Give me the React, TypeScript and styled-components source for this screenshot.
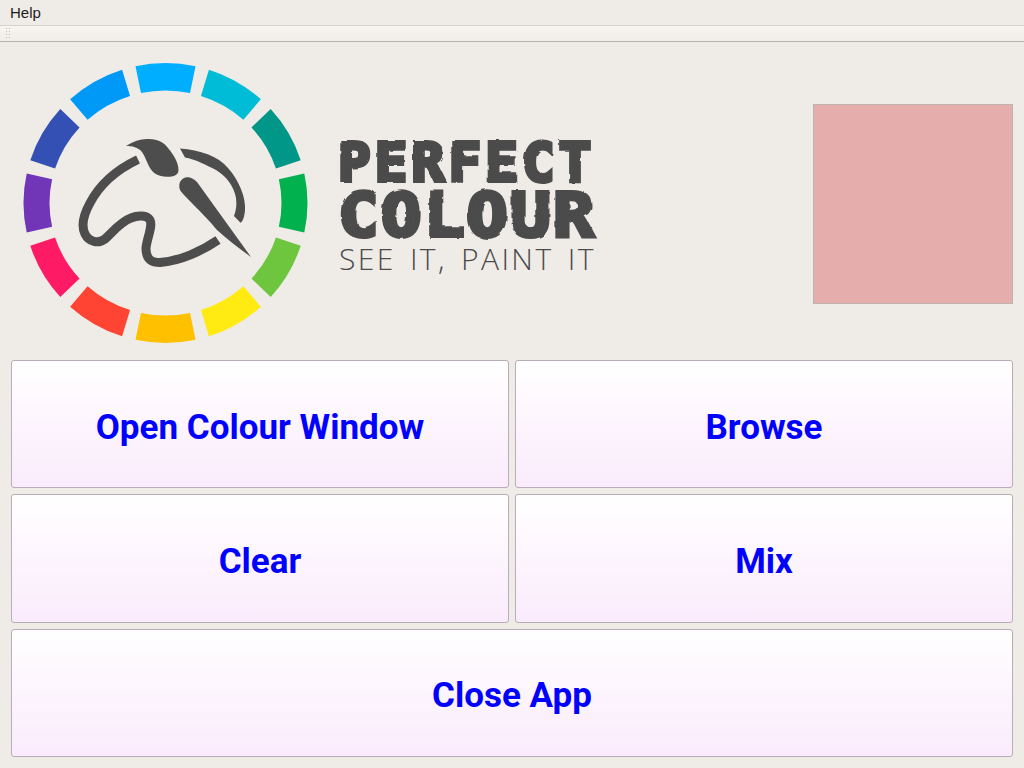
import React from 'react';
import styled, { createGlobalStyle } from 'styled-components';

const GlobalStyle = createGlobalStyle`
  html, body {
    margin: 0;
    padding: 0;
    background-color: #efebe7;
  }
`;

const AppWindow = styled.div`
  display: flex;
  flex-direction: column;
  height: 768px;
  width: 1024px;
  overflow: hidden;
  background-color: #efebe7;
`;

const MenuBar = styled.div`
  display: flex;
  align-items: center;
  height: 25px;
  padding: 0 10px 0;
  border-bottom: 1px solid #d6d2ce;
  box-sizing: content-box;
`;

const MenuItem = styled.span`
  font-family: 'Liberation Sans', Arial, sans-serif;
  font-size: 15px;
  color: #1c1c1c;
`;

const ToolBar = styled.div`
  height: 15px;
  border-bottom: 1px solid #b5b1ad;
  background: linear-gradient(#f7f4f0, #f1eee9);
  display: flex;
  padding-left: 5px;
`;

const Grip = styled.div`
  width: 5px;
  height: 13px;
  margin-top: 1px;
  background-image: radial-gradient(circle, #bdb9b5 0.8px, transparent 1px);
  background-size: 3px 3px;
`;

const Content = styled.main`
  flex: 1;
  display: flex;
  flex-direction: column;
  padding: 6px 11px 11px;
  min-height: 0;
`;

const Header = styled.header`
  display: flex;
  align-items: center;
  height: 312px;
`;

const LogoMark = styled.svg`
  width: 310px;
  height: 306px;
  flex: none;
`;

const Wordmark = styled.div`
  display: flex;
  flex-direction: column;
  margin: 5px 0 0 17px;
  color: #4b4b4b;
  width: 263px;
`;

const BrushLine = styled.div`
  font-family: 'DejaVu Sans Mono', monospace;
  font-weight: 700;
  -webkit-text-stroke: 4px #4b4b4b;
  white-space: nowrap;
  transform-origin: left center;
  filter: url(#rough);
`;

const Perfect = styled(BrushLine)`
  font-size: 54px;
  line-height: 51px;
  letter-spacing: 4.3px;
`;

const Colour = styled(BrushLine)`
  font-size: 60px;
  line-height: 54px;
  letter-spacing: 2.3px;
  transform: scaleX(1.12);
`;

const Tagline = styled.div`
  font-family: 'Open Sans', sans-serif;
  font-weight: 300;
  font-size: 30px;
  line-height: 34px;
  letter-spacing: 2.4px;
  word-spacing: 4px;
  margin-left: 1px;
  white-space: nowrap;
`;

const Swatch = styled.div`
  margin-left: auto;
  width: 198px;
  height: 198px;
  background-color: #e6adad;
  border: 1px solid #bcb4ae;
`;

const ButtonGrid = styled.div`
  flex: 1;
  display: grid;
  grid-template-columns: 1fr 1fr;
  grid-template-rows: repeat(3, 1fr);
  gap: 6px;
  min-height: 0;
`;

const ActionButton = styled.button<{ $wide?: boolean }>`
  grid-column: ${(props) => (props.$wide ? '1 / span 2' : 'auto')};
  border: 1px solid #b9acb9;
  border-radius: 3px;
  background: linear-gradient(#ffffff, #faebfc);
  color: #0000ff;
  font-family: Roboto, sans-serif;
  font-weight: 700;
  font-size: 35px;
  padding: 6px 0 0;
  cursor: pointer;
`;

const center = { x: 165.5, y: 203 };

const segmentColours = [
  '#00aeff', '#00bcd6', '#009688', '#00b14d', '#6dc63d', '#ffeb12',
  '#ffc000', '#ff4433', '#ff1a66', '#7135b8', '#3450b5', '#0099f8',
];

// one ring piece, the ring is a bit wider than it is tall
const segmentPath = (index: number) => {
  const mid = index * 30;
  const point = (angle: number, rx: number, ry: number) => {
    const rad = (angle * Math.PI) / 180;
    return `${(center.x + rx * Math.sin(rad)).toFixed(2)} ${(center.y - ry * Math.cos(rad)).toFixed(2)}`;
  };
  const a = mid - 12.2;
  const b = mid + 12.2;
  return `M${point(a, 142, 140)} A142 140 0 0 1 ${point(b, 142, 140)} L${point(b, 116, 112.5)} A116 112.5 0 0 0 ${point(a, 116, 112.5)} Z`;
};

const Logo: React.FC = () => (
  <LogoMark viewBox="11 51 310 306" aria-hidden="true">
    <defs>
      <filter id="rough" x="-5%" y="-10%" width="110%" height="120%">
        <feTurbulence type="fractalNoise" baseFrequency="0.08" numOctaves="2" seed="4" />
        <feDisplacementMap in="SourceGraphic" scale="3" />
      </filter>
    </defs>
    {segmentColours.map((colour, index) => (
      <path key={colour} d={segmentPath(index)} fill={colour} />
    ))}
    <g fill="#4d4d4d">
      <path d="M126 146 C134 141 141 138.5 149 139 C158 139.5 164 142 168 148 C174 155 178.5 163 178.5 170 C178.5 175 174 176.8 167 176.8 C158 176.5 153 173 150 168 C147 163 146 158 142 152 C138 147 132 146 126 146 Z" />
      <path d="M251 257 L197 182 C192 176.5 186 176 182.5 179 C178.5 182 178.5 188 181 191.5 C187 199 205 215 217 230 C228 240 240 249 251 257 Z" />
      <path d="M180 148.5 C200 150 218 156 228 168 C239 180 246 198 245 210 C244.5 217 242.5 222 240.5 222.7 L234 216 C236 210 237 205 236 198 C234 186 226 176 216 170 C206 165 195 159 185 157.5 Z" />
    </g>
    <g fill="none" stroke="#4d4d4d" strokeWidth="9">
      <path d="M138 159.5 C118 169 100 184 90 203 C84 214 81 226 85 234 C89 242 98 244 105 239 C113 232 120 222 131 218 C138 215 147 215 150 220 C153 226 147 238 146 248 C146 258 150 262.5 160 262.5 C180 261 202 251 218 240" />
    </g>
  </LogoMark>
);

const App: React.FC = () => {
  return (
    <AppWindow>
      <GlobalStyle />
      <MenuBar>
        <MenuItem>Help</MenuItem>
      </MenuBar>
      <ToolBar>
        <Grip />
      </ToolBar>
      <Content>
        <Header>
          <Logo />
          <Wordmark>
            <Perfect>PERFECT</Perfect>
            <Colour>COLOUR</Colour>
            <Tagline>SEE IT, PAINT IT</Tagline>
          </Wordmark>
          <Swatch />
        </Header>
        <ButtonGrid>
          <ActionButton>Open Colour Window</ActionButton>
          <ActionButton>Browse</ActionButton>
          <ActionButton>Clear</ActionButton>
          <ActionButton>Mix</ActionButton>
          <ActionButton $wide>Close App</ActionButton>
        </ButtonGrid>
      </Content>
    </AppWindow>
  );
};

export default App;
